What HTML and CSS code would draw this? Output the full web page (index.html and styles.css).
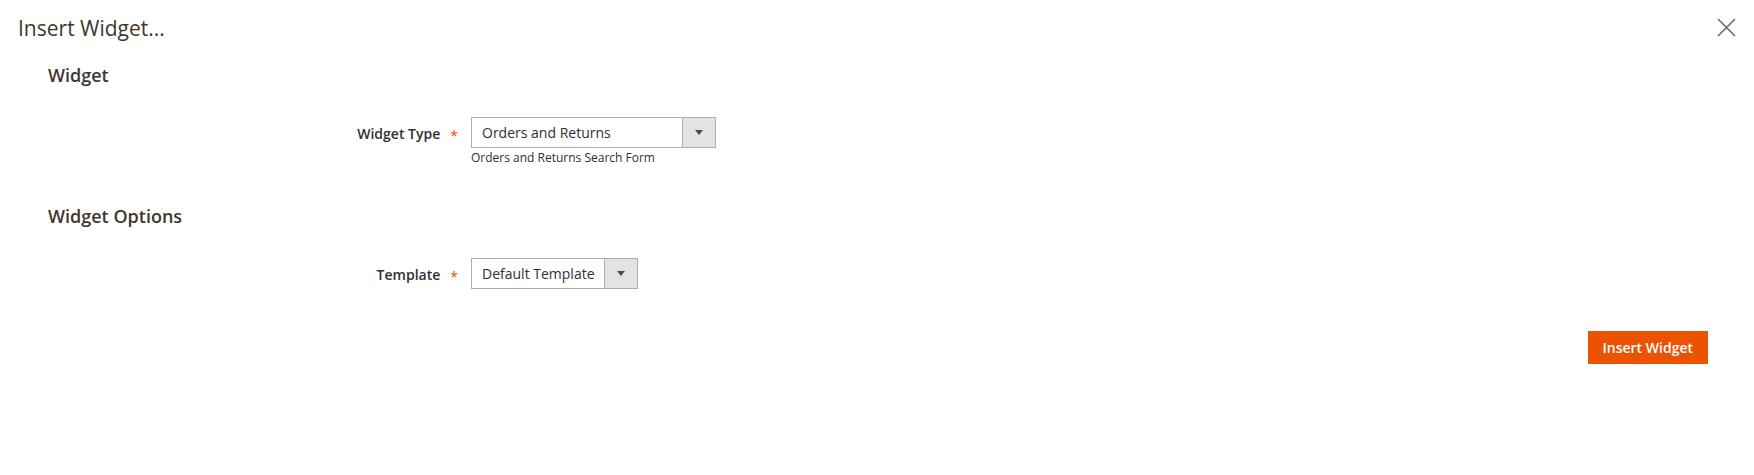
FILE: index.html
```html
<!DOCTYPE html>
<html lang="en">
<head>
<meta charset="utf-8">
<title>Insert Widget</title>
<link rel="stylesheet" href="styles.css">
</head>
<body>
<div class="modal">
  <header class="modal-header">
    <h1 class="modal-title">Insert Widget...</h1>
    <button class="modal-close" type="button" aria-label="Close">
      <svg width="19" height="19" viewBox="0 0 19 19"><path d="M1 1 L18 18 M18 1 L1 18" stroke="#6a6a6a" stroke-width="1.6" fill="none"/></svg>
    </button>
  </header>
  <div class="modal-content">
    <section class="fieldset">
      <h2 class="legend">Widget</h2>
      <div class="field">
        <div class="field-label"><span>Widget Type</span><span class="req">*</span></div>
        <div class="control">
          <div class="select select-wide"><span class="select-value">Orders and Returns</span><span class="select-arrow"></span></div>
          <div class="note">Orders and Returns Search Form</div>
        </div>
      </div>
    </section>
    <section class="fieldset fieldset-options">
      <h2 class="legend">Widget Options</h2>
      <div class="field">
        <div class="field-label"><span>Template</span><span class="req">*</span></div>
        <div class="control">
          <div class="select select-narrow"><span class="select-value">Default Template</span><span class="select-arrow"></span></div>
        </div>
      </div>
    </section>
    <div class="actions">
      <button class="action-primary" type="button">Insert Widget</button>
    </div>
  </div>
</div>
</body>
</html>
```

FILE: styles.css
```css
html, body {
  margin: 0;
  padding: 0;
  background: #ffffff;
}

body {
  font-family: "Open Sans", "Liberation Sans", sans-serif;
  color: #303030;
}

.modal-header {
  display: flex;
  justify-content: space-between;
  align-items: flex-start;
  padding: 14px 18px 0 18px;
}

.modal-title {
  margin: 0;
  font-size: 21px;
  line-height: 29px;
  font-weight: 400;
  color: #41362f;
}

.modal-close {
  margin: 4px 0 0 0;
  padding: 0;
  border: 0;
  background: none;
  width: 19px;
  height: 19px;
  display: block;
  cursor: pointer;
}

.modal-close svg {
  display: block;
}

.modal-content {
  padding: 0 46px 0 48px;
}

.legend {
  margin: 20px 0 30px 0;
  font-size: 18px;
  line-height: 24px;
  font-weight: 600;
  color: #41362f;
}

.fieldset-options .legend {
  margin-top: 38px;
}

.field {
  display: grid;
  grid-template-columns: 423px auto;
}

.field-label {
  display: flex;
  justify-content: flex-end;
  align-items: flex-start;
  gap: 10px;
  padding: 1px 13px 0 0;
  font-size: 14px;
  line-height: 31px;
  font-weight: 600;
  color: #303030;
}

.req {
  color: #eb5202;
  font-weight: 400;
  font-size: 14px;
  padding-top: 2px;
}

.control {
  display: flex;
  flex-direction: column;
  align-items: flex-start;
}

.select {
  display: flex;
  height: 31px;
  box-sizing: border-box;
  border: 1px solid #adadad;
  background: #ffffff;
}

.select-wide {
  width: 245px;
}

.select-narrow {
  width: 167px;
}

.select-value {
  flex: 1;
  padding-left: 10px;
  font-size: 14px;
  line-height: 29px;
  color: #303030;
  white-space: nowrap;
}

.select-arrow {
  width: 32px;
  border-left: 1px solid #adadad;
  background: #e3e3e3;
  display: flex;
  align-items: center;
  justify-content: center;
}

.select-arrow::before {
  content: "";
  width: 0;
  height: 0;
  border-left: 4px solid transparent;
  border-right: 4px solid transparent;
  border-top: 5px solid #514943;
}

.note {
  margin-top: 2px;
  font-size: 12px;
  line-height: 16px;
  color: #303030;
}

.actions {
  display: flex;
  justify-content: flex-end;
  margin-top: 39px;
}

.action-primary {
  font-family: "Open Sans", "Liberation Sans", sans-serif;
  background: #eb5202;
  border: 0;
  color: #ffffff;
  font-size: 14px;
  font-weight: 600;
  height: 33px;
  padding: 0 15px;
  line-height: 33px;
  cursor: pointer;
}
```
